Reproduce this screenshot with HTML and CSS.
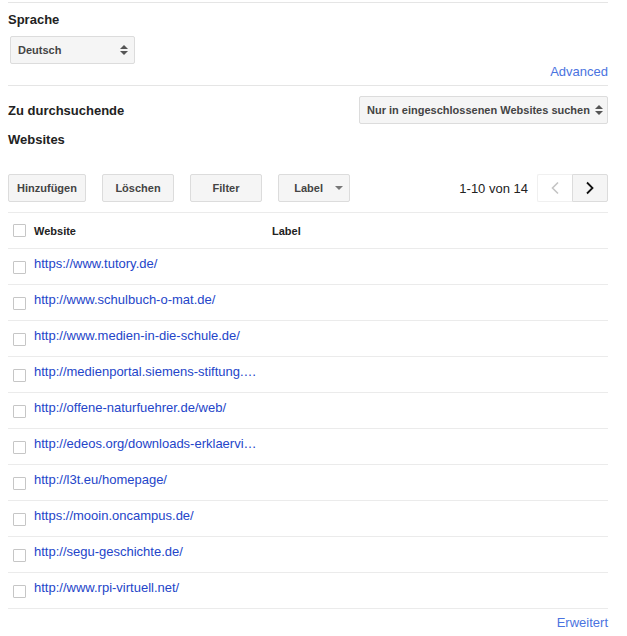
FILE: index.html
```html
<!DOCTYPE html>
<html lang="de">
<head>
<meta charset="utf-8">
<title>Websites</title>
<link rel="stylesheet" href="styles.css">
</head>
<body>
<div class="page">
  <div class="rule"></div>
  <section class="lang">
    <h2 class="heading">Sprache</h2>
    <div class="select select-lang">
      <span>Deutsch</span>
      <span class="updown"><i class="up"></i><i class="down"></i></span>
    </div>
    <div class="adv-row top"><a class="adv" href="#">Advanced</a></div>
  </section>
  <div class="rule"></div>
  <section class="sites">
    <div class="sites-head">
      <h2 class="heading">Zu durchsuchende<br><span class="second">Websites</span></h2>
      <div class="select select-mode">
        <span>Nur in eingeschlossenen Websites suchen</span>
        <span class="updown"><i class="up"></i><i class="down"></i></span>
      </div>
    </div>
    <div class="toolbar">
      <div class="btns">
        <button class="btn w78">Hinzufügen</button>
        <button class="btn">Löschen</button>
        <button class="btn">Filter</button>
        <button class="btn btn-label">Label <i class="caret"></i></button>
      </div>
      <div class="pager">
        <span class="count">1-10 von 14</span>
        <div class="pgbtns">
          <button class="pg prev"><svg width="10" height="14" viewBox="0 0 10 14"><path d="M8 1.5 L2.5 7 L8 12.5" fill="none" stroke="#c4c4c4" stroke-width="1.6"/></svg></button>
          <button class="pg next"><svg width="10" height="14" viewBox="0 0 10 14"><path d="M2 1.5 L7.5 7 L2 12.5" fill="none" stroke="#111" stroke-width="1.8"/></svg></button>
        </div>
      </div>
    </div>
    <div class="table">
      <div class="row head">
        <span class="cb"></span>
        <span class="col-site">Website</span>
        <span class="col-label">Label</span>
      </div>
      <div class="row"><span class="cb"></span><a class="col-site link" href="#">https://www.tutory.de/</a></div>
      <div class="row"><span class="cb"></span><a class="col-site link" href="#">http://www.schulbuch-o-mat.de/</a></div>
      <div class="row"><span class="cb"></span><a class="col-site link" href="#">http://www.medien-in-die-schule.de/</a></div>
      <div class="row"><span class="cb"></span><a class="col-site link" href="#" title="http://medienportal.siemens-stiftung.org/">http://medienportal.siemens-stiftung.…</a></div>
      <div class="row"><span class="cb"></span><a class="col-site link" href="#">http://offene-naturfuehrer.de/web/</a></div>
      <div class="row"><span class="cb"></span><a class="col-site link" href="#" title="http://edeos.org/downloads-erklaervideos/">http://edeos.org/downloads-erklaervi…</a></div>
      <div class="row"><span class="cb"></span><a class="col-site link" href="#">http://l3t.eu/homepage/</a></div>
      <div class="row"><span class="cb"></span><a class="col-site link" href="#">https://mooin.oncampus.de/</a></div>
      <div class="row"><span class="cb"></span><a class="col-site link" href="#">http://segu-geschichte.de/</a></div>
      <div class="row"><span class="cb"></span><a class="col-site link" href="#">http://www.rpi-virtuell.net/</a></div>
    </div>
    <div class="adv-row bottom"><a class="adv" href="#">Erweitert</a></div>
  </section>
</div>
</body>
</html>
```
FILE: styles.css
```css
* { box-sizing: border-box; }
html, body { margin: 0; padding: 0; background: #fff; }
body {
  font-family: "Liberation Sans", Arial, sans-serif;
  color: #222;
}
.page {
  width: 600px;
  margin: 0 8px;
  padding-top: 2px;
}
.rule { height: 1px; background: #e5e5e5; }

.heading {
  margin: 0;
  font-size: 13px;
  font-weight: bold;
  color: #222;
  line-height: 16px;
}
.lang .heading { padding-top: 9px; }

.select {
  display: flex;
  align-items: center;
  justify-content: space-between;
  height: 28px;
  background: #f5f5f5;
  border: 1px solid #dcdcdc;
  border-radius: 2px;
  font-size: 11px;
  font-weight: bold;
  color: #444;
}
.select-lang {
  width: 125px;
  margin: 8px 0 0 2px;
  padding: 0 6px 0 7px;
}
.updown {
  display: flex;
  flex-direction: column;
  gap: 2px;
}
.updown i {
  display: block;
  width: 0; height: 0;
  border-left: 4px solid transparent;
  border-right: 4px solid transparent;
}
.updown .up { border-bottom: 4px solid #555; }
.updown .down { border-top: 4px solid #555; }

.adv-row {
  display: flex;
  justify-content: flex-end;
}
.adv-row.top { height: 21px; padding-top: 1px; }
.adv {
  font-size: 13px;
  line-height: 14px;
  color: #4a73e0;
  text-decoration: none;
}

.sites-head {
  display: flex;
  justify-content: space-between;
  align-items: flex-start;
  padding-top: 10px;
}
.sites-head .heading {
  line-height: 16px;
  padding-top: 7px;
}
.sites-head .second { display: inline-block; margin-top: 13px; }
.select-mode {
  width: 249px;
  padding: 0 4px 0 7px;
}

.toolbar {
  display: flex;
  justify-content: space-between;
  align-items: center;
  margin-top: 26px;
  padding-bottom: 10px;
  border-bottom: 1px solid #ebebeb;
}
.btns { display: flex; gap: 16px; }
.btn {
  width: 72px;
  height: 28px;
  background: #f5f5f5;
  border: 1px solid #dcdcdc;
  border-radius: 2px;
  font-family: "Liberation Sans", Arial, sans-serif;
  font-size: 11px;
  font-weight: bold;
  color: #444;
  padding: 0;
}
.btn.w78 { width: 78px; }
.btn-label {
  display: flex;
  align-items: center;
  justify-content: flex-end;
  padding-right: 6px;
  gap: 12px;
}
.caret {
  display: block;
  width: 0; height: 0;
  border-left: 4px solid transparent;
  border-right: 4px solid transparent;
  border-top: 4px solid #777;
}
.pager { display: flex; align-items: center; gap: 9px; }
.count { font-size: 13px; color: #222; }
.pgbtns { display: flex; }
.pg {
  width: 36px;
  height: 28px;
  display: flex;
  align-items: center;
  justify-content: center;
  padding: 0;
  border-radius: 2px;
}
.pg.prev {
  background: #fff;
  border: 1px solid #f0f0f0;
  border-right: none;
  border-radius: 2px 0 0 2px;
  width: 35px;
}
.pg.next {
  background: #f5f5f5;
  border: 1px solid #dcdcdc;
  border-radius: 0 2px 2px 0;
}

.table { display: flex; flex-direction: column; }
.row {
  display: flex;
  align-items: flex-start;
  height: 36px;
  border-bottom: 1px solid #ebebeb;
  padding-left: 5px;
}
.row .cb { margin-top: 12px; }
.row .col-site { margin-top: 7px; }
.row.head { align-items: center; }
.row.head .cb, .row.head .col-site { margin-top: 0; }
.cb {
  flex: none;
  width: 13px;
  height: 13px;
  border: 1px solid #c6c6c6;
  border-radius: 1px;
  background: #fff;
  margin-right: 8px;
}
.col-site {
  width: 238px;
  font-size: 13px;
  line-height: 16px;
}
.head .col-site, .head .col-label {
  font-size: 11px;
  font-weight: bold;
  color: #222;
}
.link {
  display: block;
  color: #2445c9;
  text-decoration: none;
  white-space: nowrap;
}
.adv-row.bottom {
  padding-top: 7px;
}
```
